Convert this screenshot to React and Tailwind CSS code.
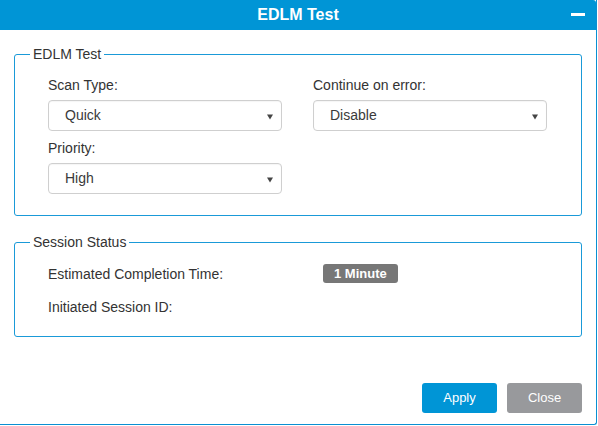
import React from "react";

function Caret() {
  return (
    <svg width="6" height="6" viewBox="0 0 6 6" className="absolute right-[8px] top-[13px]">
      <path d="M0 0.5 H6 L3 5.5 Z" fill="#444" />
    </svg>
  );
}

function FakeSelect({ value }) {
  return (
    <div className="relative h-[31px] w-full border border-[#cfcfcf] rounded-[4px] bg-white flex items-center pl-[16px] text-[14px] text-[#3a3a3a] shadow-[inset_0_1px_1px_rgba(0,0,0,0.04)]">
      {value}
      <Caret />
    </div>
  );
}

function Field({ label, value }) {
  return (
    <div className="flex flex-col">
      <div className="text-[14px] leading-[16px] text-[#333] mb-[7px]">{label}</div>
      <FakeSelect value={value} />
    </div>
  );
}

export default function App() {
  return (
    <div
      className="w-[598px] h-[426px] bg-white"
      style={{ fontFamily: '"Liberation Sans", Arial, sans-serif' }}
    >
      <div className="w-[597px] h-[425px] bg-white border-r border-b border-[#0a8fd2] rounded-br-[3px] flex flex-col">
        <div className="relative h-[30px] bg-[#0095d6] flex items-center justify-center text-white font-bold text-[16px] rounded-tr-[3px]">
          EDLM Test
          <div className="absolute right-[11px] top-[13px] w-[14px] h-[3px] bg-white" />
        </div>

        <div className="flex flex-col px-[14px]">
          <fieldset className="mt-[16px] w-[568px] border border-[#1a9ad8] rounded-[3px] pb-[21px]">
            <legend className="ml-[15px] px-[3px] text-[14px] leading-[16px] text-[#333]">EDLM Test</legend>
            <div className="grid grid-cols-[234px_234px] gap-x-[31px] px-[33px] pt-[15px]">
              <Field label="Scan Type:" value="Quick" />
              <Field label="Continue on error:" value="Disable" />
              <div className="mt-[9px]">
                <Field label="Priority:" value="High" />
              </div>
            </div>
          </fieldset>

          <fieldset className="mt-[18px] w-[568px] border border-[#1a9ad8] rounded-[3px] pb-[21px]">
            <legend className="ml-[15px] px-[3px] text-[14px] leading-[16px] text-[#333]">Session Status</legend>
            <div className="flex flex-col gap-[16px] px-[33px] pt-[14px] text-[14px] leading-[16px] text-[#333]">
              <div className="flex items-center">
                <div className="w-[275px]">Estimated Completion Time:</div>
                <span className="h-[19px] px-[11px] rounded-[3px] bg-[#777777] text-white font-bold text-[13px] leading-[19px]">
                  1 Minute
                </span>
              </div>
              <div>Initiated Session ID:</div>
            </div>
          </fieldset>

          <div className="mt-[46px] flex justify-end gap-[10px]">
            <button className="w-[75px] h-[30px] rounded-[3px] bg-[#0095d6] text-white text-[13px]">Apply</button>
            <button className="w-[75px] h-[30px] rounded-[3px] bg-[#98999c] text-white text-[13px]">Close</button>
          </div>
        </div>
      </div>
    </div>
  );
}
